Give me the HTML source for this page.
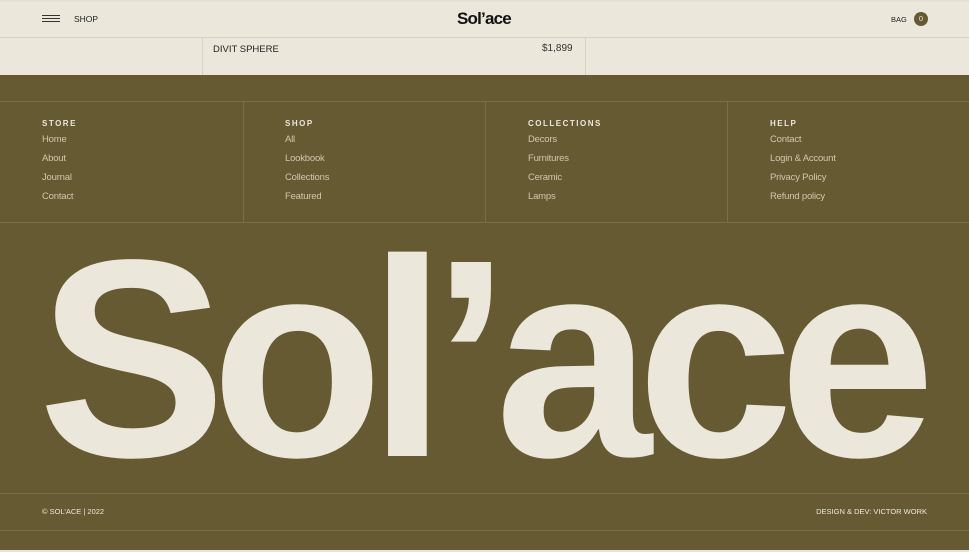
<!DOCTYPE html>
<html><head><meta charset="utf-8"><style>
*{margin:0;padding:0;box-sizing:border-box}
body{width:969px;height:552px;overflow:hidden;background:#e6e3d6;font-family:"Liberation Sans",sans-serif;position:relative}
.hdr{position:absolute;left:0;top:2px;width:969px;height:36px;background:#ebe8db;border-bottom:1px solid #d6d2c2}
.prow{position:absolute;left:0;top:38px;width:969px;height:37px;background:#ebe8db}
.ol{position:absolute;left:0;top:75px;width:969px;height:475px;background:#665a33}
.ln{position:absolute;height:1px;background:#7a6e48}
.vl{position:absolute;width:1px;background:#7a6e48}
.t{position:absolute;white-space:nowrap}
.h{font-size:8px;font-weight:bold;letter-spacing:1.5px;color:#ebe8db}
.a{font-size:9.5px;color:#cfc8ad;letter-spacing:-0.2px}
</style></head><body>
<div class="hdr">
  <div style="position:absolute;left:42px;top:13px;width:18px;height:1.3px;background:#333;box-shadow:0 3px 0 #333,0 6px 0 #333"></div>
  <div class="t" style="left:74px;top:12px;font-size:8.5px;color:#222">SHOP</div>
  <div class="t" style="left:457px;top:7px;font-size:17px;font-weight:bold;color:#111;letter-spacing:-0.8px">Sol’ace</div>
  <div class="t" style="left:891px;top:13px;font-size:7.5px;color:#222">BAG</div>
  <div style="position:absolute;left:914px;top:10px;width:14px;height:14px;border-radius:50%;background:#665a33;color:#ebe8db;font-size:7.5px;text-align:center;line-height:14px">0</div>
</div>
<div class="prow">
  <div style="position:absolute;left:202px;top:0;width:1px;height:37px;background:#d6d2c2"></div>
  <div style="position:absolute;left:585px;top:0;width:1px;height:37px;background:#d6d2c2"></div>
  <div class="t" style="left:213px;top:6px;font-size:9.5px;color:#222">DIVIT SPHERE</div>
  <div class="t" style="left:542px;top:5px;font-size:10px;color:#333">$1,899</div>
</div>
<div class="ol">
  <div class="ln" style="left:0;top:26px;width:969px"></div>
  <div class="ln" style="left:0;top:147px;width:969px"></div>
  <div class="vl" style="left:243px;top:26px;height:121px"></div>
  <div class="vl" style="left:485px;top:26px;height:121px"></div>
  <div class="vl" style="left:727px;top:26px;height:121px"></div>
  <div class="ln" style="left:0;top:418px;width:969px"></div>
  <div class="ln" style="left:0;top:455px;width:969px"></div>
</div>
<div class="t h" style="left:42px;top:119px">STORE</div>
<div class="t a" style="left:42px;top:134px">Home</div>
<div class="t a" style="left:42px;top:153px">About</div>
<div class="t a" style="left:42px;top:172px">Journal</div>
<div class="t a" style="left:42px;top:191px">Contact</div>
<div class="t h" style="left:285px;top:119px">SHOP</div>
<div class="t a" style="left:285px;top:134px">All</div>
<div class="t a" style="left:285px;top:153px">Lookbook</div>
<div class="t a" style="left:285px;top:172px">Collections</div>
<div class="t a" style="left:285px;top:191px">Featured</div>
<div class="t h" style="left:528px;top:119px">COLLECTIONS</div>
<div class="t a" style="left:528px;top:134px">Decors</div>
<div class="t a" style="left:528px;top:153px">Furnitures</div>
<div class="t a" style="left:528px;top:172px">Ceramic</div>
<div class="t a" style="left:528px;top:191px">Lamps</div>
<div class="t h" style="left:770px;top:119px">HELP</div>
<div class="t a" style="left:770px;top:134px">Contact</div>
<div class="t a" style="left:770px;top:153px">Login &amp; Account</div>
<div class="t a" style="left:770px;top:172px">Privacy Policy</div>
<div class="t a" style="left:770px;top:191px">Refund policy</div>
<svg style="position:absolute;left:0;top:0" width="969" height="552">
<text x="38" y="456" font-family="Liberation Sans, sans-serif" font-weight="bold" font-size="282" letter-spacing="-15" fill="#ebe8db">Sol’ace</text>
</svg>
<div class="t" style="left:42px;top:507px;font-size:7.5px;color:#ebe8db">© SOL’ACE | 2022</div>
<div class="t" style="right:42px;top:507px;font-size:7.5px;color:#ebe8db">DESIGN &amp; DEV: VICTOR WORK</div>
</body></html>
